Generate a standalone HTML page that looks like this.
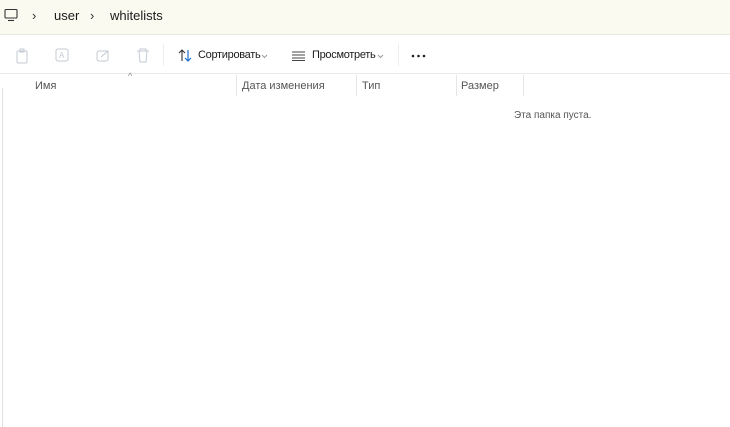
<!DOCTYPE html>
<html><head><meta charset="utf-8"><style>
*{margin:0;padding:0;box-sizing:border-box}
body{width:730px;height:427px;background:#fff;font-family:"Liberation Sans","DejaVu Sans",sans-serif;position:relative;overflow:hidden;color:#1a1a1a}
.top{position:absolute;left:0;top:0;width:730px;height:35px;background:#fafaf1;border-bottom:1px solid #e6e6d8}
.t{position:absolute;white-space:nowrap}
.tb{position:absolute;left:0;top:36px;width:730px;height:38px;border-bottom:1px solid #ebebe6}
.hdr{font-size:11px;color:#555}
.sep{position:absolute;top:75px;width:1px;height:21px;background:#e6e6e6}
</style></head><body>
<div class="top">
<svg class="t" style="left:4px;top:8px" width="14" height="14" viewBox="0 0 14 14"><rect x="1" y="1.5" width="12" height="8.5" rx="1" fill="none" stroke="#333" stroke-width="1.1"/><path d="M4 12.5h6" stroke="#333" stroke-width="1.1"/></svg>
<div class="t" style="left:32px;top:8px;font-size:13px;color:#333">›</div>
<div class="t" style="left:54px;top:8px;font-size:13px">user</div>
<div class="t" style="left:90px;top:8px;font-size:13px;color:#333">›</div>
<div class="t" style="left:110px;top:8px;font-size:13px">whitelists</div>
</div>
<div class="tb">
<svg class="t" style="left:15px;top:12px" width="14" height="16"><rect x="2" y="3" width="10" height="12" rx="1" fill="none" stroke="#c3cad3"/><rect x="5" y="1" width="4" height="3" fill="none" stroke="#c3cad3"/></svg>
<svg class="t" style="left:55px;top:12px" width="14" height="14"><rect x="1" y="1" width="12" height="12" rx="2" fill="none" stroke="#c3cad3"/><text x="4" y="10" font-size="8" fill="#c3cad3" font-family="Liberation Sans">A</text></svg>
<svg class="t" style="left:96px;top:12px" width="14" height="14"><rect x="1" y="3" width="11" height="10" rx="2" fill="none" stroke="#c3cad3"/><path d="M5 9l7-6M9 3h3v3" fill="none" stroke="#c3cad3"/></svg>
<svg class="t" style="left:136px;top:12px" width="14" height="15"><path d="M1 3h12M4 3V1h6v2M3 3l1 11h6l1-11" fill="none" stroke="#c3cad3"/></svg>
<div class="t" style="left:163px;top:8px;width:1px;height:22px;background:#eeeeee"></div>
<svg class="t" style="left:178px;top:13px" width="15" height="13"><path d="M4 12V1M1 4l3-3 3 3" fill="none" stroke="#333" stroke-width="1.1"/><path d="M10 1v11M7 9l3 3 3-3" fill="none" stroke="#1a6fd0" stroke-width="1.2"/></svg>
<div class="t" style="left:198px;top:13px;font-size:11px;letter-spacing:-0.3px">Сортировать</div>
<svg class="t" style="left:261px;top:18px" width="7" height="5"><path d="M1 1l2.5 2.5L6 1" fill="none" stroke="#999"/></svg>
<svg class="t" style="left:291px;top:15px" width="15" height="10"><path d="M1 1h13M1 4h13M1 7h13M1 9.5h13" stroke="#444" stroke-width="1"/></svg>
<div class="t" style="left:312px;top:13px;font-size:11px;letter-spacing:-0.3px">Просмотреть</div>
<svg class="t" style="left:377px;top:18px" width="7" height="5"><path d="M1 1l2.5 2.5L6 1" fill="none" stroke="#999"/></svg>
<div class="t" style="left:398px;top:8px;width:1px;height:22px;background:#eeeeee"></div>
<svg class="t" style="left:411px;top:18px" width="16" height="4"><circle cx="2" cy="2" r="1.3" fill="#222"/><circle cx="7.5" cy="2" r="1.3" fill="#222"/><circle cx="13" cy="2" r="1.3" fill="#222"/></svg>
</div>
<div class="t" style="left:2px;top:88px;width:1px;height:339px;background:#e0e0e0"></div>
<div class="t" style="left:128px;top:71px;font-size:9px;color:#888">^</div>
<div class="t hdr" style="left:35px;top:80px">Имя</div>
<div class="sep" style="left:236px"></div>
<div class="t hdr" style="left:242px;top:80px">Дата изменения</div>
<div class="sep" style="left:356px"></div>
<div class="t hdr" style="left:362px;top:80px">Тип</div>
<div class="sep" style="left:456px"></div>
<div class="t hdr" style="left:461px;top:80px">Размер</div>
<div class="sep" style="left:523px"></div>
<div class="t" style="left:514px;top:110px;font-size:10px;color:#555">Эта папка пуста.</div>
</body></html>
